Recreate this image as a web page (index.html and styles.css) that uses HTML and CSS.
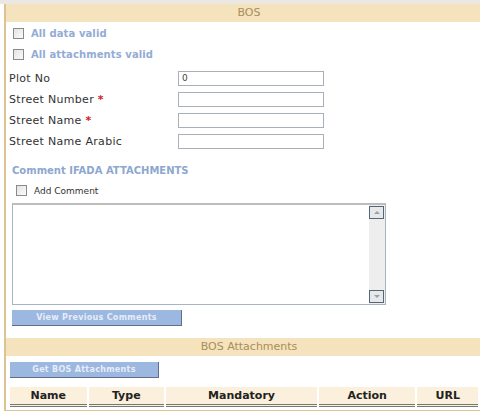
FILE: index.html
```html
<!DOCTYPE html>
<html lang="en">
<head>
    <meta charset="UTF-8">
    <title>BOS</title>
    <link rel="stylesheet" href="styles.css">
</head>
<body>
    <div class="top-strip"></div>
    <div class="panel">
        <div class="section-head">BOS</div>

        <div class="checks">
            <label class="check-row"><span class="box"></span>All data valid</label>
            <label class="check-row"><span class="box"></span>All attachments valid</label>
        </div>

        <div class="form-grid">
            <div class="lbl">Plot No</div>
            <div class="field">0</div>
            <div class="lbl">Street Number <span class="req">*</span></div>
            <div class="field"></div>
            <div class="lbl">Street Name <span class="req">*</span></div>
            <div class="field"></div>
            <div class="lbl">Street Name Arabic</div>
            <div class="field"></div>
        </div>

        <div class="sub-title">Comment IFADA ATTACHMENTS</div>
        <label class="add-comment"><span class="box small"></span>Add Comment</label>

        <div class="comment-box">
            <div class="comment-text"></div>
            <div class="scrollbar">
                <span class="arrow up"></span>
                <span class="arrow down"></span>
            </div>
        </div>

        <button class="blue-btn view-btn">View Previous Comments</button>

        <div class="section-head second">BOS Attachments</div>

        <button class="blue-btn get-btn">Get BOS Attachments</button>

        <table class="att-table">
            <thead>
                <tr>
                    <th class="c-name">Name</th>
                    <th class="c-type">Type</th>
                    <th class="c-mand">Mandatory</th>
                    <th class="c-action">Action</th>
                    <th class="c-url">URL</th>
                </tr>
            </thead>
        </table>
    </div>
</body>
</html>
```

FILE: styles.css
```css
* {
    margin: 0;
    padding: 0;
    box-sizing: border-box;
}

body {
    font-family: 'DejaVu Sans', Verdana, sans-serif;
    font-size: 11px;
    color: #333;
    background: #fff;
    overflow: hidden;
}

.top-strip {
    height: 4px;
    background: #ebe8e3;
}

.panel {
    margin-left: 4px;
    border-left: 2px solid #dcc492;
    border-bottom: 1px solid #dcc492;
    height: 407px;
}

.section-head {
    height: 18px;
    line-height: 18px;
    background: #f5e3bd;
    color: #a88d5c;
    text-align: center;
    font-size: 11px;
    padding-left: 12px;
}

.section-head.second {
    margin-top: 12px;
}

.checks {
    padding: 1px 0 0 7px;
}

.check-row {
    display: flex;
    align-items: center;
    height: 21px;
    font-weight: bold;
    color: #93acd4;
    font-size: 10px;
    letter-spacing: 0.1px;
}

.box {
    width: 11px;
    height: 11px;
    border: 1px solid #8a8a8a;
    background: linear-gradient(135deg, #e4e4e4, #fafafa);
    margin-right: 7px;
    display: inline-block;
}

.form-grid {
    display: grid;
    grid-template-columns: 169px 146px;
    row-gap: 6px;
    padding: 6px 0 0 3px;
    align-items: center;
}

.lbl {
    color: #333;
    font-size: 11px;
    letter-spacing: 0.3px;
}

.req {
    color: #d02020;
    font-weight: bold;
}

.field {
    height: 15px;
    border: 1px solid #a9b0b8;
    background: #fff;
    font-size: 9px;
    line-height: 13px;
    padding-left: 3px;
    color: #444;
}

.sub-title {
    margin: 16px 0 0 6px;
    font-weight: bold;
    color: #8ea7cf;
    font-size: 10px;
}

.add-comment {
    display: flex;
    align-items: center;
    margin: 9px 0 0 10px;
    font-size: 9px;
    color: #333;
}

.comment-box {
    display: flex;
    margin: 7px 0 0 6px;
    width: 374px;
    height: 102px;
    border: 1px solid #a9b4c0;
    border-top: 2px solid #bdbdbd;
    background: #fff;
}

.comment-text {
    flex: 1;
}

.scrollbar {
    width: 16px;
    background: #eeeeee;
    display: flex;
    flex-direction: column;
    justify-content: space-between;
    padding: 1px 1px 1px 0;
}

.arrow {
    display: block;
    height: 13px;
    border: 1px solid #556677;
    background: #e6e9ec;
    position: relative;
}

.arrow::after {
    content: '';
    position: absolute;
    left: 4px;
    border-left: 3px solid transparent;
    border-right: 3px solid transparent;
}

.arrow.up::after {
    top: 4px;
    border-bottom: 3px solid #a0a0a0;
}

.arrow.down::after {
    top: 4px;
    border-top: 3px solid #a0a0a0;
}

.blue-btn {
    display: block;
    height: 16px;
    background: #9cb7e0;
    color: #e6edf8;
    font-family: 'DejaVu Sans', Verdana, sans-serif;
    font-size: 8px;
    font-weight: bold;
    letter-spacing: 0.3px;
    border: none;
    border-right: 1px solid #5f6f88;
    border-bottom: 1px solid #5f6f88;
    text-align: center;
}

.view-btn {
    width: 170px;
    margin: 5px 0 0 6px;
}

.get-btn {
    width: 149px;
    margin: 6px 0 0 4px;
}

.att-table {
    margin: 9px 0 0 2px;
    border-collapse: separate;
    border-spacing: 2px 0;
}

.att-table th {
    height: 20px;
    background: #faf0dc;
    color: #222;
    font-size: 11px;
    font-weight: bold;
    border-bottom: 3px double #777;
}

.c-name { width: 77px; }
.c-type { width: 76px; }
.c-mand { width: 152px; }
.c-action { width: 97px; }
.c-url { width: 61px; }
```
